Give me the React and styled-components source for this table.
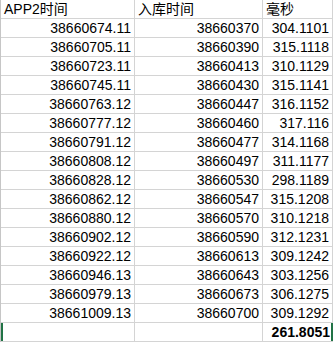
import React from "react";
import styled, { createGlobalStyle } from "styled-components";

const rows = [
  ["38660674.11", "38660370", "304.1101"],
  ["38660705.11", "38660390", "315.1118"],
  ["38660723.11", "38660413", "310.1129"],
  ["38660745.11", "38660430", "315.1141"],
  ["38660763.12", "38660447", "316.1152"],
  ["38660777.12", "38660460", "317.116"],
  ["38660791.12", "38660477", "314.1168"],
  ["38660808.12", "38660497", "311.1177"],
  ["38660828.12", "38660530", "298.1189"],
  ["38660862.12", "38660547", "315.1208"],
  ["38660880.12", "38660570", "310.1218"],
  ["38660902.12", "38660590", "312.1231"],
  ["38660922.12", "38660613", "309.1242"],
  ["38660946.13", "38660643", "303.1256"],
  ["38660979.13", "38660673", "306.1275"],
  ["38661009.13", "38660700", "309.1292"],
];

const GlobalStyle = createGlobalStyle`
  html, body {
    margin: 0;
    padding: 0;
    background: #ffffff;
  }
  body {
    font-family: "Liberation Sans", "Noto Sans CJK SC", Arial, sans-serif;
    color: #000000;
  }
`;

const Sheet = styled.div`
  display: grid;
  grid-template-columns: 134px 128px 70px;
  grid-auto-rows: 19px;
  width: 333px;
  border-left: 1px solid #c6c6c6;
  overflow: hidden;
`;

const Cell = styled.div`
  box-sizing: border-box;
  border-right: 1px solid #d4d4d4;
  border-bottom: 1px solid #d4d4d4;
  padding: 0 3px;
  font-size: 14px;
  line-height: 18px;
  white-space: nowrap;
  overflow: hidden;
  text-align: ${(p) => (p.$head ? "left" : "right")};
  font-weight: ${(p) => (p.$bold ? 700 : 400)};
  box-shadow: ${(p) =>
    p.$selLeft
      ? "inset 2px 0 0 #217346"
      : p.$selRight
      ? "inset -1px 0 0 #217346"
      : "none"};
`;

const Edge = styled.div`
  box-sizing: border-box;
  border-bottom: 1px solid #d4d4d4;
  box-shadow: inset -2px 0 0 #217346;
  padding: 0 3px;
  font-size: 14px;
  line-height: 18px;
  font-weight: 700;
  text-align: right;
  white-space: nowrap;
`;

export default function App() {
  return (
    <>
      <GlobalStyle />
      <Sheet>
        <Cell $head>APP2时间</Cell>
        <Cell $head>入库时间</Cell>
        <Cell $head>毫秒</Cell>
        {rows.map((r) => (
          <React.Fragment key={r[0]}>
            <Cell>{r[0]}</Cell>
            <Cell>{r[1]}</Cell>
            <Cell>{r[2]}</Cell>
          </React.Fragment>
        ))}
        <Cell $selLeft />
        <Cell />
        <Edge>261.8051</Edge>
      </Sheet>
    </>
  );
}
